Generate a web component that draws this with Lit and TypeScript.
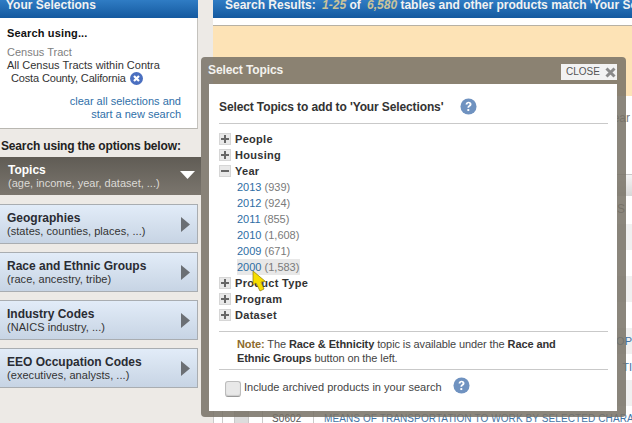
import { LitElement, html, css, svg } from "lit";
import { customElement } from "lit/decorators.js";

const help = (size: number) => html`<svg width=${size} height=${size} viewBox="0 0 18 18" class="help">
  <circle cx="9" cy="9" r="8.5" fill="#6f92c0"/>
  <path d="M5.9 7c0-2 1.5-3.1 3.2-3.1 1.8 0 3.1 1 3.1 2.6 0 1.300-.8 1.900-1.600 2.400-.7.500-.9.800-.9 1.500H7.900c0-1.200.3-1.800 1.200-2.400.7-.5 1-.8 1-1.400 0-.6-.4-1-1-1-.7 0-1.100.5-1.100 1.400z" fill="#fff"/>
  <rect x="7.800" y="11.700" width="2" height="2.100" fill="#fff"/>
</svg>`;

const toggle = (open: boolean) => html`<svg class="tog" width="12" height="12" viewBox="0 0 12 12">
  <rect x=".5" y=".5" width="11" height="11" fill="#e8e8e8" stroke="#d6d6d6"/>
  <rect x="2" y="5" width="8" height="2" fill="#666"/>
  ${open ? "" : svg`<rect x="5" y="2" width="2" height="8" fill="#666"/>`}
</svg>`;

const options = [
  ["Geographies", "(states, counties, places, ...)"],
  ["Race and Ethnic Groups", "(race, ancestry, tribe)"],
  ["Industry Codes", "(NAICS industry, ...)"],
  ["EEO Occupation Codes", "(executives, analysts, ...)"],
];
const years = [
  ["2013", "(939)"], ["2012", "(924)"], ["2011", "(855)"],
  ["2010", "(1,608)"], ["2009", "(671)"], ["2000", "(1,583)"],
];
const rows: [string, boolean][] = [
  ["", true], ["", false], ["", true], ["", false], ["OP", true], ["TI", false], ["", true],
];

@customElement("app-root")
export class AppRoot extends LitElement {
  static styles = css`
    :host {
      display: block; width: 632px; height: 423px; overflow: hidden; position: relative;
      background: #edeae6; font-family: "Liberation Sans", Arial, sans-serif; color: #333;
    }
    .page { display: grid; grid-template-columns: 198px 1fr; column-gap: 15px; height: 423px; overflow: hidden; }
    .bar {
      height: 18px; background: linear-gradient(#2f7cc4, #14599f); color: #f2f2f2;
      font-weight: bold; font-size: 12px; line-height: 11px; box-sizing: border-box; padding-left: 6px; white-space: nowrap; overflow: hidden;
    }
    .sel { background: #fff; height: 111px; box-sizing: border-box; padding: 8px 0 0 7px; border-right: 1px solid #c4c2bd; border-bottom: 1px solid #b9b7b1; margin-bottom: 10px; font-size: 11px; }
    .using { font-weight: bold; color: #111; line-height: 14px; margin-bottom: 6px; letter-spacing: .15px; }
    .tract { color: #808080; line-height: 13px; }
    .all { color: #333; line-height: 12.500px; }
    .all span { display: block; padding-left: 4px; height: 12px; line-height: 12px; letter-spacing: -.15px; white-space: nowrap; }
    .x { vertical-align: -3px; margin-left: 1px; }
    .clear { color: #2f6fa8; text-align: right; margin: 11px 16px 0 0; line-height: 13px; }
    .below { font-size: 12px; font-weight: bold; color: #222; line-height: 14px; margin: 0 0 4px 1px; white-space: nowrap; letter-spacing: -.16px; }
    .topic {
      height: 38px; background: linear-gradient(#605c55, #7b766e); color: #fff;
      box-sizing: border-box; padding: 6px 0 0 8px; display: flex; justify-content: space-between; margin-bottom: 9px; width: 201px;
    }
    .name { font-size: 12px; font-weight: bold; line-height: 14px; }
    .sub { font-size: 11px; line-height: 13px; }
    .topic .sub { color: #dcdad6; }
    .tri { margin: 8px 6px 0 0; }
    .opt {
      height: 40px; margin-bottom: 8px; box-sizing: border-box; padding: 6px 0 0 7px;
      background: linear-gradient(#e2ecf8, #c7d4e4); border: 1px solid #a9adb1; border-left: 0;
      display: flex; justify-content: space-between; color: #333;
    }
    .opt .name { color: #2a2c33; }
    .opt .sub { letter-spacing: .05px; }
    .opt svg { margin: 6px 7px 0 0; }
    .main { background: #fff; min-width: 0; overflow: hidden; }
    .main .bar { padding-left: 12px; }
    .main .bar i { color: #c9c39a; margin-left: 3px; }
    .gap { height: 7px; }
    .notice { height: 70px; background: #fde3b6; border-top: 1px solid #b7b1a4; }
    .intro { height: 79px; font-size: 12px; color: #777; text-align: right; padding: 15px 2px 0 0; box-sizing: border-box; border-bottom: 1px solid #c8c8c8; line-height: 14px; }
    .head { height: 21px; background: linear-gradient(#f4f4f4, #d8d8d8); }
    .sort { height: 28px; font-size: 12px; color: #777; text-align: right; line-height: 26px; padding-right: 7px; box-sizing: border-box; }
    .row { height: 26px; font-size: 11px; line-height: 26px; text-align: right; color: #4474a5; white-space: nowrap; }
    .row.alt { background: #f0f0f0; }
    .last { display: grid; grid-template-columns: 9px 12px 14px 14px 51px 1fr; height: 26px; font-size: 10px; letter-spacing: .1px; line-height: 26px; color: #4474a5; white-space: nowrap; }
    .last > div { border-left: 1px solid #c9c9c9; min-width: 0; box-sizing: border-box; }
    .last .code { color: #555; padding-left: 9px; }
    .last .title-cell { padding-left: 10px; overflow: hidden; }
    .last .shade { background: #dcdcdc; }

    .modal {
      position: absolute; left: 201px; top: 57px; width: 425px; height: 360px; box-sizing: border-box;
      background: rgba(120, 114, 102, .86); border-radius: 4px; padding: 27px 9px 6px 8px;
    }
    .title { position: absolute; left: 7px; top: 6px; color: #f4f2ee; font-size: 12px; font-weight: bold; line-height: 14px; letter-spacing: -.1px; }
    .close {
      position: absolute; right: 9px; top: 7px; width: 56px; height: 16px; background: #f2f2f2; color: #555;
      font-size: 10px; line-height: 16px; display: flex; align-items: center; gap: 5px; padding-left: 5px; box-sizing: border-box;
    }
    .body { background: #fff; height: 100%; box-sizing: border-box; padding: 14px 9px 0 10px; }
    .heading { display: flex; align-items: center; gap: 17px; font-size: 12px; font-weight: bold; letter-spacing: -.12px; color: #333; height: 17px; margin-bottom: 8px; }
    .hr { border-top: 1px solid #c9c9c9; }
    .hr.spaced { margin-top: 8px; }
    .tree { margin-top: 7px; font-size: 11px; }
    .node { display: flex; align-items: center; gap: 4px; height: 16px; font-weight: bold; color: #333; letter-spacing: .3px; }
    .tog { flex: none; }
    .leaf { height: 16px; line-height: 16px; padding-left: 18px; color: #7a7a7a; }
    .leaf a { color: #2e6da4; }
    .leaf span { display: inline-block; }
    .leaf.hover span { background: #e8e8e8; padding-right: 1px; }
    .note { padding: 5px 0 0 18px; font-size: 11px; line-height: 14px; height: 32px; color: #444; letter-spacing: -.1px; }
    .note em { font-style: normal; font-weight: bold; color: #8d6a2c; }
    .note b { color: #333; }
    .archive { display: flex; align-items: center; font-size: 11px; color: #444; margin-top: 5px; padding-left: 6px; height: 24px; }
    .box { width: 16px; height: 16px; box-sizing: border-box; border: 1px solid #bcbcbc; border-bottom-color: #999; border-radius: 3px; background: #e8e8e8; margin-right: 3px; flex: none; box-shadow: inset 0 -1px 1px #ccc; margin-top: 3px; }
    .archive .help { margin-left: 11px; margin-top: -3px; }
    .cursor { position: absolute; left: 252px; top: 270px; }
  `;

  render() {
    return html`
      <div class="page">
        <aside>
          <div class="bar">Your Selections</div>
          <div class="sel">
            <div class="using">Search using...</div>
            <div class="tract">Census Tract</div>
            <div class="all">All Census Tracts within Contra<span>Costa County, California
              <svg class="x" width="13" height="13" viewBox="0 0 13 13">
                <circle cx="6.500" cy="6.500" r="6.500" fill="#4a6fc0"/>
                <path d="M4 4l5 5M9 4l-5 5" stroke="#fff" stroke-width="2.200"/>
              </svg></span></div>
            <div class="clear">clear all selections and<br />start a new search</div>
          </div>
          <div class="below">Search using the options below:</div>
          <div class="topic">
            <div><div class="name">Topics</div><div class="sub">(age, income, year, dataset, ...)</div></div>
            <svg class="tri" width="15" height="8" viewBox="0 0 15 8"><path d="M0 0h15L7.500 8z" fill="#fff"/></svg>
          </div>
          ${options.map(([n, s]) => html`<div class="opt">
            <div><div class="name">${n}</div><div class="sub">${s}</div></div>
            <svg width="9" height="15" viewBox="0 0 9 15"><path d="M0 0l9 7.500L0 15z" fill="#6b6f74"/></svg>
          </div>`)}
        </aside>
        <main class="main">
          <div class="bar">Search Results: <i>1-25</i> of <i>6,580</i> tables and other products match 'Your Selections'</div>
          <div class="gap"></div>
          <div class="notice"></div>
          <div class="intro">Clear</div>
          <div class="head"></div>
          <div class="sort">S</div>
          ${rows.map(([t, alt]) => html`<div class="row ${alt ? "alt" : ""}">${t}</div>`)}
          <div class="last">
            <div></div><div></div><div class="shade"></div><div></div>
            <div class="code">S0602</div>
            <div class="title-cell">MEANS OF TRANSPORTATION TO WORK BY SELECTED CHARACTERISTICS</div>
          </div>
        </main>
      </div>
      <section class="modal">
        <div class="title">Select Topics</div>
        <div class="close">CLOSE
          <svg width="11" height="11" viewBox="0 0 11 11"><path d="M1.500 1.500l8 8M9.500 1.500l-8 8" stroke="#8a8a8a" stroke-width="3"/></svg>
        </div>
        <div class="body">
          <div class="heading">Select Topics to add to 'Your Selections' ${help(17)}</div>
          <div class="hr"></div>
          <div class="tree">
            <div class="node">${toggle(false)}People</div>
            <div class="node">${toggle(false)}Housing</div>
            <div class="node">${toggle(true)}Year</div>
            ${years.map(([y, c], i) => html`<div class="leaf ${i === 5 ? "hover" : ""}"><span><a>${y}</a> ${c}</span></div>`)}
            <div class="node">${toggle(false)}Product Type</div>
            <div class="node">${toggle(false)}Program</div>
            <div class="node">${toggle(false)}Dataset</div>
          </div>
          <div class="hr spaced"></div>
          <div class="note"><em>Note:</em> The <b>Race &amp; Ethnicity</b> topic is available under the <b>Race and<br />Ethnic Groups</b> button on the left.</div>
          <div class="hr"></div>
          <div class="archive"><span class="box"></span>Include archived products in your search ${help(17)}</div>
        </div>
      </section>
      <svg class="cursor" width="15" height="23" viewBox="0 0 15 23">
        <path d="M1 1L1 15L4 13L8 21L12 19L9 12L13.500 11.500Z" fill="#f7de00" stroke="#8a7a10" stroke-width=".7"/>
      </svg>
    `;
  }
}
